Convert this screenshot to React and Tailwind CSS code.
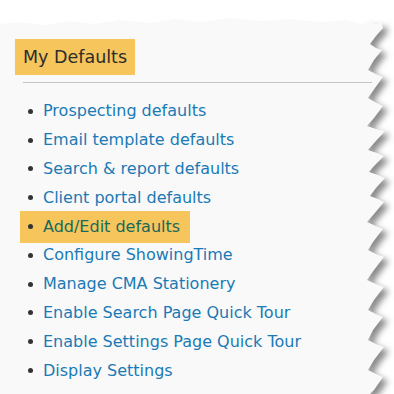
import React from "react";

const links = [
  "Prospecting defaults",
  "Email template defaults",
  "Search & report defaults",
  "Client portal defaults",
  "Add/Edit defaults",
  "Configure ShowingTime",
  "Manage CMA Stationery",
  "Enable Search Page Quick Tour",
  "Enable Settings Page Quick Tour",
  "Display Settings",
];

const edge = [
  [0, 24], [8, 22], [14, 24], [19, 22], [21, 28], [14, 36], [8, 44], [14, 48], [20, 50],
  [12, 60], [6, 70], [14, 74], [21, 77], [13, 88], [6, 98], [13, 102], [21, 106], [12, 118],
  [5, 126], [14, 129], [23, 131], [13, 142], [6, 150], [15, 153], [22, 156], [12, 166],
  [7, 172], [16, 175], [23, 178], [14, 188], [8, 196], [16, 199], [22, 202], [12, 214],
  [5, 222], [14, 226], [21, 229], [11, 242], [6, 250], [14, 254], [22, 257], [12, 270],
  [5, 280], [14, 284], [22, 287], [12, 300], [6, 310], [14, 314], [21, 317], [11, 330],
  [6, 340], [14, 344], [22, 347], [12, 360], [6, 370], [14, 374], [21, 377], [12, 390],
  [8, 394], [0, 394],
];

function TornEdge() {
  const pts = edge.map(([x, y]) => `${x},${y}`).join(" ");
  return (
    <svg width="32" height="394" viewBox="0 0 32 394" className="shrink-0">
      <defs>
        <filter id="blur" x="-50%" y="-10%" width="200%" height="120%">
          <feGaussianBlur stdDeviation="3" />
        </filter>
      </defs>
      <polygon points={pts} transform="translate(5 4)" fill="#8a8a8a" filter="url(#blur)" />
      <polygon points={pts} fill="#f9f9f9" />
      <line x1="0" y1="82.5" x2="10" y2="82.5" stroke="#c4c4c4" />
    </svg>
  );
}

function TornTop() {
  return (
    <svg width="362" height="28" viewBox="0 0 362 28" className="block">
      <polygon
        points="0,28 0,24 20,22 45,25 70,21 95,24 120,20 150,23 175,19 200,22 230,18 260,21 290,19 320,22 345,20 362,24 362,28"
        fill="#f9f9f9"
      />
    </svg>
  );
}

export default function App() {
  return (
    <div className="flex h-[394px] w-[394px] bg-white font-['DejaVu_Sans',Verdana,sans-serif]">
      <div className="flex w-[362px] flex-col">
        <TornTop />
        <div className="flex-1 bg-[#f9f9f9]">
          <div className="ml-[15px] mt-[11px] inline-flex h-[36px] w-[120px] items-center bg-[#f6c55b] pl-[8px] text-[17.5px] text-[#2d2d2d]">
            My Defaults
          </div>
          <div className="ml-[23px] mt-[7px] h-px bg-[#c4c4c4]" />
          <ul className="mt-[14px]">
            {links.map((label) =>
              label === "Add/Edit defaults" ? (
                <li key={label} className="flex h-[28.8px] items-center">
                  <span className="ml-[20px] flex h-[32px] w-[170px] items-center bg-[#f6c55b]">
                    <span className="ml-[8px] mr-[10px] h-[5px] w-[5px] rounded-full bg-[#333]" />
                    <span className="text-[16px] text-[#17695c]">{label}</span>
                  </span>
                </li>
              ) : (
                <li key={label} className="flex h-[28.8px] items-center">
                  <span className="ml-[28px] mr-[10px] h-[5px] w-[5px] rounded-full bg-[#333]" />
                  <a href="#" className="text-[16px] text-[#1a7ab5]">
                    {label}
                  </a>
                </li>
              )
            )}
          </ul>
        </div>
      </div>
      <TornEdge />
    </div>
  );
}
